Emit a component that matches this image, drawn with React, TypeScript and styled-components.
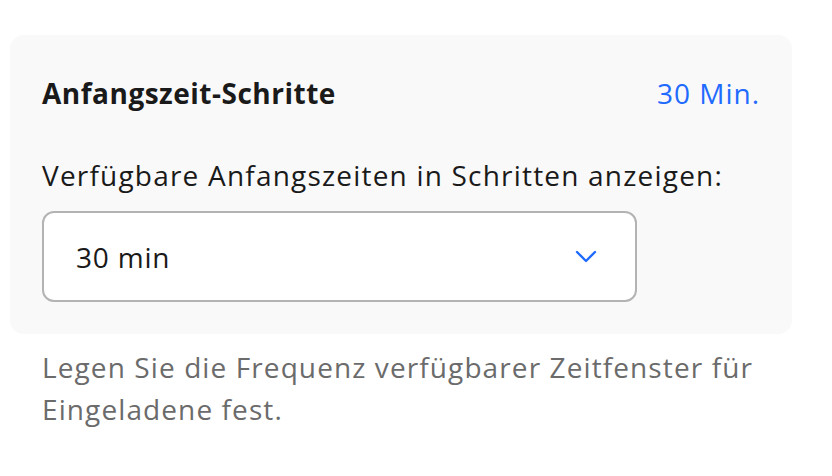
import React from "react";
import styled, { createGlobalStyle } from "styled-components";

const Global = createGlobalStyle`
  html, body { margin: 0; padding: 0; background: #ffffff; }
  body { font-family: "Open Sans", Lato, sans-serif; color: #1a1a1a; }
`;

const Page = styled.div`
  padding: 35px 40px 0 10px;
  width: 782px;
`;

const Card = styled.section`
  background: #f9f9f9;
  border-radius: 14px;
  padding: 39px 32px 32px 32px;
  display: flex;
  flex-direction: column;
`;

const Header = styled.div`
  display: flex;
  justify-content: space-between;
  align-items: baseline;
`;

const Title = styled.h3`
  margin: 0;
  font-size: 28px;
  line-height: 38px;
  font-weight: 700;
  letter-spacing: 0.5px;
  color: #1a1a1a;
`;

const Value = styled.span`
  font-size: 28px;
  letter-spacing: 1px;
  color: #1f6bff;
`;

const Label = styled.p`
  margin: 44px 0 17px 0;
  font-size: 28px;
  line-height: 38px;
  letter-spacing: 1.2px;
  color: #1a1a1a;
`;

const Select = styled.div`
  width: 595px;
  height: 91px;
  box-sizing: border-box;
  background: #ffffff;
  border: 2px solid #b3b3b3;
  border-radius: 12px;
  display: flex;
  align-items: center;
  justify-content: space-between;
  padding: 0 38px 0 32px;
  font-size: 28px;
  letter-spacing: 0.8px;
  color: #1a1a1a;
`;

const Help = styled.p`
  margin: 12px 0 0 32px;
  font-size: 28px;
  line-height: 42px;
  letter-spacing: 1.1px;
  color: #6b6b6b;
  width: 740px;
`;

export default function App() {
  return (
    <>
      <Global />
      <Page>
        <Card>
          <Header>
            <Title>Anfangszeit-Schritte</Title>
            <Value>30 Min.</Value>
          </Header>
          <Label>Verfügbare Anfangszeiten in Schritten anzeigen:</Label>
          <Select>
            <span>30 min</span>
            <svg width="22" height="14" viewBox="0 0 22 14" fill="none">
              <path d="M2 2 L11 11 L20 2" stroke="#1f6bff" strokeWidth="2.4" strokeLinecap="round" strokeLinejoin="round" />
            </svg>
          </Select>
        </Card>
        <Help>Legen Sie die Frequenz verfügbarer Zeitfenster für Eingeladene fest.</Help>
      </Page>
    </>
  );
}
